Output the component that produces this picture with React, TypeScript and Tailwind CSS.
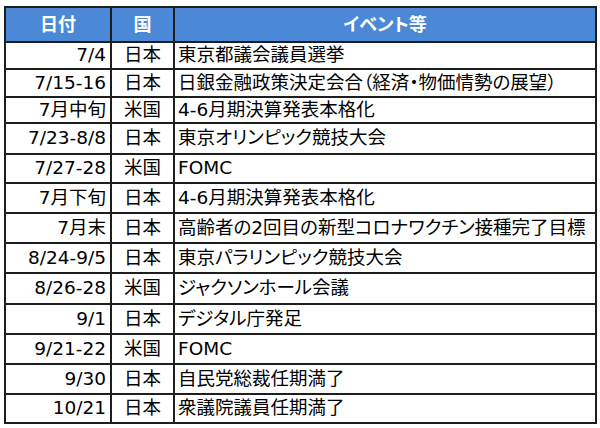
const rows = [
  { date: "7/4", country: "日本", event: "東京都議会議員選挙", h: "h-[27px]" },
  { date: "7/15-16", country: "日本", event: "日銀金融政策決定会合（経済・物価情勢の展望）", h: "h-[28px]" },
  { date: "7月中旬", country: "米国", event: "4-6月期決算発表本格化", h: "h-[26px]" },
  { date: "7/23-8/8", country: "日本", event: "東京オリンピック競技大会", h: "h-[31px]" },
  { date: "7/27-28", country: "米国", event: "FOMC", h: "h-[29px]" },
  { date: "7月下旬", country: "日本", event: "4-6月期決算発表本格化", h: "h-[30px]" },
  { date: "7月末", country: "日本", event: "高齢者の2回目の新型コロナワクチン接種完了目標", h: "h-[30px]" },
  { date: "8/24-9/5", country: "日本", event: "東京パラリンピック競技大会", h: "h-[30px]" },
  { date: "8/26-28", country: "米国", event: "ジャクソンホール会議", h: "h-[31px]" },
  { date: "9/1", country: "日本", event: "デジタル庁発足", h: "h-[30px]" },
  { date: "9/21-22", country: "米国", event: "FOMC", h: "h-[30px]" },
  { date: "9/30", country: "日本", event: "自民党総裁任期満了", h: "h-[30px]" },
  { date: "10/21", country: "日本", event: "衆議院議員任期満了", h: "h-[29px]" },
];

export default function App() {
  return (
    <div className="w-[600px] h-[428px] bg-white pt-[6px] pl-[4px] font-['DejaVu_Sans','Noto_Sans_CJK_JP',sans-serif] text-[18px] text-black">
      <table className="w-[593px] border-collapse border-2 border-[#1e1e1e] table-fixed">
        <colgroup>
          <col className="w-[106px]" />
          <col className="w-[63px]" />
          <col />
        </colgroup>
        <thead>
          <tr className="h-[35px] bg-[#4b88d6] text-white font-bold">
            <th className="border-2 border-[#1e1e1e] text-center">日付</th>
            <th className="border-2 border-[#1e1e1e] text-center">国</th>
            <th className="border-2 border-[#1e1e1e] text-center [font-feature-settings:'palt']">イベント等</th>
          </tr>
        </thead>
        <tbody>
          {rows.map((r) => (
            <tr key={r.date} className={r.h}>
              <td className="border-2 border-[#1e1e1e] text-right pr-[4px] leading-none whitespace-nowrap text-[18.5px]">
                {r.date}
              </td>
              <td className="border-2 border-[#1e1e1e] text-center leading-none text-[18.5px]">
                {r.country}
              </td>
              <td className="border-2 border-[#1e1e1e] text-left pl-[3px] leading-none whitespace-nowrap text-[18.5px] [font-feature-settings:'palt']">
                {r.event}
              </td>
            </tr>
          ))}
        </tbody>
      </table>
    </div>
  );
}
